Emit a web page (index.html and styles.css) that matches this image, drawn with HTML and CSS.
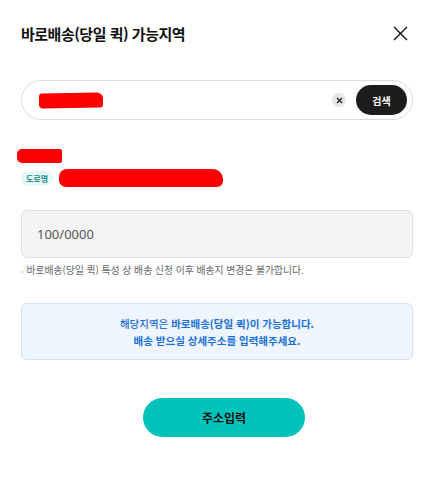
FILE: index.html
```html
<!DOCTYPE html>
<html lang="ko">
<head>
  <meta charset="UTF-8" />
  <meta name="viewport" content="width=device-width, initial-scale=1.0"/>
  <title>바로배송 가능지역</title>
  <link rel="stylesheet" href="styles.css">
</head>
<body>

  <div class="modal">
    <!-- 헤더 -->
    <div class="modal-head">
      <h2>바로배송(당일 퀵) 가능지역</h2>
      <button class="btn-close" aria-label="닫기">
        <svg width="15" height="15" viewBox="0 0 15 15"><path d="M1 1L14 14M14 1L1 14" stroke="#111" stroke-width="1.4" fill="none"/></svg>
      </button>
    </div>

    <!-- 검색 -->
    <div class="search">
      <span class="search-text"><span class="mask mask-search"></span></span>
      <button class="btn-clear" aria-label="지우기">
        <svg width="7" height="7" viewBox="0 0 7 7"><path d="M1 1L6 6M6 1L1 6" stroke="#222" stroke-width="1.3"/></svg>
      </button>
      <button class="btn-search">검색</button>
    </div>

    <!-- 결과 주소 -->
    <div class="result">
      <div class="zip"><span class="mask mask-zip"></span></div>
      <div class="addr">
        <span class="badge">도로명</span>
        <span class="mask mask-addr"></span>
      </div>
    </div>

    <div class="detail">100/0000</div>
    <p class="notice">바로배송(당일 퀵) 특성 상 배송 신청 이후 배송지 변경은 불가합니다.</p>

    <div class="info">
      <p>해당지역은 <b>바로배송(당일 퀵)이 가능합니다.</b></p>
      <p><b>배송 받으실 상세주소를 입력해주세요.</b></p>
    </div>

    <button class="btn-submit">주소입력</button>
  </div>

</body>
</html>
```

FILE: styles.css
```css
body {
  margin: 0;
  background: #fff;
  font-family: "Noto Sans CJK KR", "Noto Sans", sans-serif;
  color: #111;
}

.modal {
  padding: 20px 20px 40px 21px;
}

.modal-head {
  display: flex;
  align-items: center;
  justify-content: space-between;
  height: 26px;
}

.modal-head h2 {
  margin: 0;
  font-size: 15px;
  font-weight: 700;
  letter-spacing: -0.5px;
}

.btn-close {
  border: 0;
  background: none;
  padding: 0;
  margin-right: 5px;
  display: flex;
}

/* 검색창 */
.search {
  margin-top: 34px;
  height: 40px;
  box-sizing: border-box;
  border: 1px solid #dcdcdc;
  border-radius: 20px;
  display: flex;
  align-items: center;
  padding: 0 5px 0 16px;
}

.search-text {
  flex: 1;
  display: flex;
  align-items: center;
}

.btn-clear {
  width: 14px;
  height: 14px;
  border-radius: 50%;
  border: 0;
  background: #e6e6e6;
  padding: 0;
  display: flex;
  align-items: center;
  justify-content: center;
  margin-right: 10px;
}

.btn-search {
  width: 51px;
  height: 30px;
  border: 0;
  border-radius: 15px;
  background: #1c1c1c;
  color: #fff;
  font-family: inherit;
  font-size: 10px;
  font-weight: 700;
}

/* 가려진 개인정보 */
.mask {
  display: inline-block;
  background: #ff0000;
}
.mask-search {
  width: 64px;
  height: 15px;
  margin-left: 1px;
  border-radius: 3px 6px 3px 4px;
  transform: skewY(-1deg);
}
.mask-zip {
  width: 45px;
  height: 14px;
  border-radius: 5px 2px 2px 5px;
  margin-left: -4px;
}
.mask-addr {
  width: 164px;
  height: 18px;
  border-radius: 8px 10px 6px 7px;
}

.result {
  margin-top: 24px;
}

.zip {
  height: 16px;
}

.addr {
  margin-top: 9px;
  display: flex;
  align-items: center;
  gap: 6px;
}

.badge {
  display: inline-block;
  height: 15px;
  line-height: 15px;
  padding: 0 5px;
  border-radius: 8px;
  background: #e6f7f6;
  color: #138c86;
  font-size: 8px;
  font-weight: 700;
}

/* 상세주소 */
.detail {
  margin-top: 23px;
  height: 48px;
  box-sizing: border-box;
  border: 1px solid #e0e0e0;
  border-radius: 6px;
  background: #f4f4f4;
  padding: 0 15px;
  display: flex;
  align-items: center;
  font-size: 13px;
  color: #555;
  font-family: "Noto Sans", sans-serif;
}

.notice {
  margin: 5px 0 0;
  font-size: 9.8px;
  color: #666;
  line-height: 14px;
}
.notice::before {
  content: "\2022";
  color: #ccc;
  margin-right: 3px;
  font-size: 7px;
}

/* 안내 */
.info {
  margin-top: 25px;
  height: 57px;
  box-sizing: border-box;
  border: 1px solid #d2e3f8;
  border-radius: 6px;
  background: #eef5ff;
  display: flex;
  flex-direction: column;
  justify-content: center;
  text-align: center;
  color: #1b6fd8;
  font-size: 10.5px;
  line-height: 17px;
  font-weight: 500;
}
.info p {
  margin: 0;
}

.btn-submit {
  display: block;
  margin: 38px 0 0 122px;
  width: 162px;
  height: 39px;
  border: 0;
  border-radius: 20px;
  background: #00c3bb;
  color: #111;
  font-family: inherit;
  font-size: 12px;
  font-weight: 700;
}
```
